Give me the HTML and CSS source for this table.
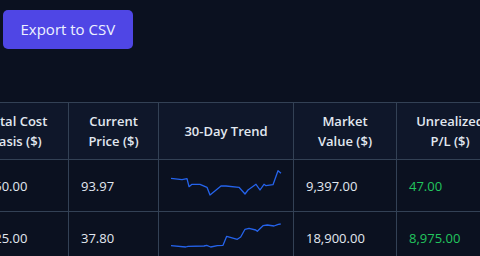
FILE: index.html
```html
<!DOCTYPE html>
<html lang="en">
<head>
<meta charset="utf-8">
<title>Portfolio</title>
<link rel="stylesheet" href="styles.css">
</head>
<body>
<div class="page">
  <div class="toolbar">
    <button class="btn-export" type="button">Export to CSV</button>
  </div>
  <div class="table-wrap">
    <table class="holdings">
      <colgroup>
        <col class="c-cost"><col class="c-price"><col class="c-trend"><col class="c-value"><col class="c-pl">
      </colgroup>
      <thead>
        <tr>
          <th>Total Cost<br>Basis ($)</th>
          <th>Current<br>Price ($)</th>
          <th>30-Day Trend</th>
          <th>Market<br>Value ($)</th>
          <th>Unrealized<br>P/L ($)</th>
        </tr>
      </thead>
      <tbody>
        <tr>
          <td>9,350.00</td>
          <td>93.97</td>
          <td class="trend">
            <svg class="spark" viewBox="0 0 110 27" width="110" height="27">
              <polyline points="0,6.3 11,7.7 16,6.7 18,14.7 21,12.3 29,12.3 36,15.3 39,23 50,14 55,14 68,15.3 74,22 77,18 85,12.3 89,18 93,12.3 95,13.7 102,12.7 107,-1.3 110,1.3"/>
            </svg>
          </td>
          <td>9,397.00</td>
          <td class="gain">47.00</td>
        </tr>
        <tr>
          <td>9,925.00</td>
          <td>37.80</td>
          <td class="trend">
            <svg class="spark" viewBox="0 0 110 27" width="110" height="27">
              <polyline points="0,21.7 14.7,23 17,22.3 33,22 35.7,21.3 39.7,23 46.3,21.7 52,21.3 55.7,12.3 66.3,15.3 69.7,13 74,5.3 78,4.3 84.7,6 86.3,7.3 92,1.7 96.3,1 103,2 107.3,0.3 109.7,0"/>
            </svg>
          </td>
          <td>18,900.00</td>
          <td class="gain">8,975.00</td>
        </tr>
      </tbody>
    </table>
  </div>
</div>
</body>
</html>
```

FILE: styles.css
```css
html, body {
  margin: 0;
  padding: 0;
  overflow: hidden;
  background: #0b1120;
}
body {
  font-family: "Open Sans", "Noto Sans", sans-serif;
  color: #e2e8f0;
}
.page {
  display: flex;
  flex-direction: column;
  padding-top: 10px;
}
.toolbar {
  display: flex;
  padding-left: 3px;
}
.btn-export {
  font-family: inherit;
  font-size: 15px;
  line-height: 23px;
  padding: 8px 17.5px;
  border: none;
  border-radius: 5px;
  background: #4f46e5;
  color: #eef2ff;
  cursor: pointer;
}
.table-wrap {
  margin-top: 53px;
  overflow: hidden;
  width: 100%;
}
.holdings {
  border-collapse: collapse;
  table-layout: fixed;
  margin-left: -37px;
  width: 540px;
  font-size: 13px;
}
.c-cost { width: 105px; }
.c-price { width: 90px; }
.c-trend { width: 135px; }
.c-value { width: 103px; }
.c-pl { width: 107px; }
.holdings th,
.holdings td {
  border: 1px solid #334155;
}
.holdings th {
  background: #0f172a;
  font-weight: 600;
  line-height: 20px;
  padding: 8px 12px;
  text-align: center;
  color: #e2e8f0;
}
.holdings td {
  padding: 12px;
  line-height: 20px;
  text-align: left;
  vertical-align: middle;
}
.holdings td.gain {
  color: #22c55e;
}
.spark {
  display: block;
  overflow: visible;
}
.spark polyline {
  fill: none;
  stroke: #2563eb;
  stroke-width: 1.3;
  stroke-linejoin: round;
}
```
